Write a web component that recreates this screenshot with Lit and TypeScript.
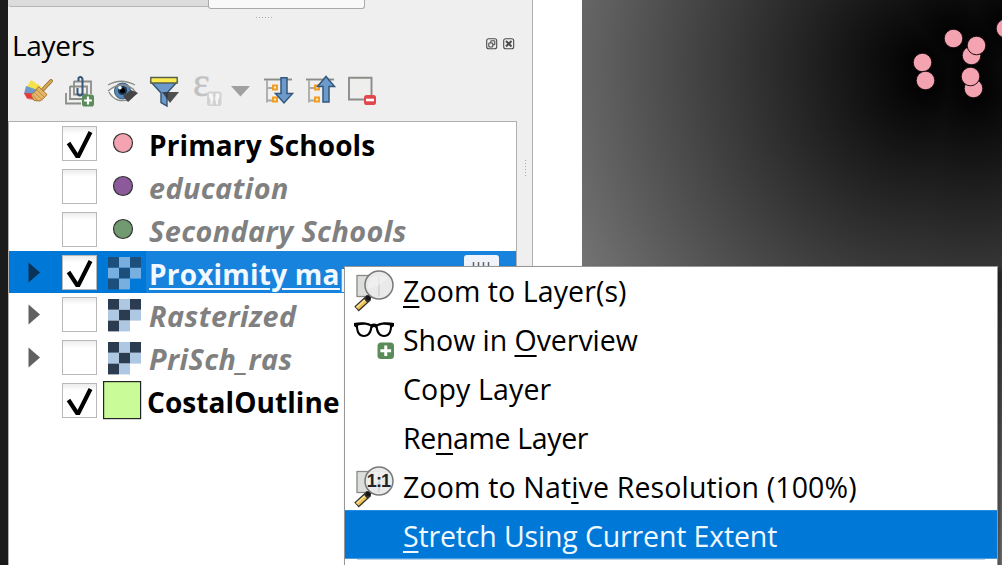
import { LitElement, html, css, svg, nothing } from "lit";
import { customElement, property } from "lit/decorators.js";

const plusBadge = (x: number, y: number, s: number) => svg`
  <g transform="translate(${x} ${y}) scale(${s / 16})">
    <rect x="0" y="0" width="16" height="16" rx="3.4" fill="#5a8c5a"/>
    <path d="M8 2.8V13.2M2.8 8H13.2" stroke="#fff" stroke-width="2.9"/>
  </g>`;

const lens = svg`
  <rect x="3" y="4.500" width="22" height="21" fill="#dcdedc" stroke="#888a85" stroke-width="1.3"/>
  <path d="M15 26.500L2.500 38" stroke="#333" stroke-width="6.600"/>
  <path d="M11.500 29.700L3.200 37.300" stroke="#edc04d" stroke-width="4.200"/>
  <path d="M10.800 29L2.600 36.500" stroke="#f9e7a0" stroke-width="1.200"/>
  <circle cx="14.500" cy="26.500" r="2.600" fill="#161616"/>
  <circle cx="25" cy="14" r="14" fill="#e9e9e9" fill-opacity=".96" stroke="#77797a" stroke-width="1.500"/>
  <path d="M25 6V25" stroke="#c5c7c5" stroke-width="1"/>
  <path d="M14 17a11 11 0 0 1 19-9C28 12 23 17 14 17Z" fill="#f4f4f4" opacity=".6"/>`;

const icons: Record<string, unknown> = {
  zoom: svg`${lens}`,
  native: svg`${lens}<text x="24.500" y="20" text-anchor="middle" class="one">1:1</text>`,
  glasses: svg`
    <path d="M0 3C6 1.800 13 2 17 4.200Q20 3 23 4.200C27 2 34 1.800 40 3V6L38 7.500C37.500 13 35.500 17 30 17C25 17 22.500 13.500 21.700 8Q20 6 18.300 8C17.500 13.500 15 17 10 17C4.500 17 2.500 13 2 7.500L0 6Z" fill="#000"/>
    <path d="M4 5.500C8 4.200 14 4.500 16.300 6.300C16 11 14 15 10 15C6 15 4 11.500 4 5.500Z" fill="#fff"/>
    <path d="M36 5.500C32 4.200 26 4.500 23.700 6.300C24 11 26 15 30 15C34 15 36 11.500 36 5.500Z" fill="#fff"/>
    ${plusBadge(23.5, 22.5, 16.5)}`,
};

const tools = [
  {
    w: 42,
    art: svg`
    <path d="M8 4L19 11L14 17L3 12Z" fill="#f6e34c"/>
    <path d="M3 10L15 14L12 20L1 18Z" fill="#6d9ac8"/>
    <path d="M1 17L14 18L17 24L4 22Z" fill="#e8393b"/>
    <path d="M1 17L14 18L17 25L4 23Z" fill="#e8393b" opacity=".6"/>
    <path d="M20 13.500L28 5" stroke="#94691f" stroke-width="3.800" stroke-linecap="round"/>
    <path d="M20 13.500L28 5" stroke="#d8a75b" stroke-width="2.200" stroke-linecap="round"/>
    <path d="M15.500 10.500L24 18.500L20.500 22.500L17 25L11 24.500L8 19L12.500 15Z" fill="#e5b569" stroke="#a4762e" stroke-width="1"/>
    <path d="M14 14L21.500 21.500M12 17L19.500 24M10 19L14 24" stroke="#b98a40" stroke-width=".9"/>`,
  },
  {
    w: 42,
    art: svg`
    <path d="M1 17V27.500H16" fill="none" stroke="#8b8d88" stroke-width="1.800"/>
    <path d="M5 10.500H22V23M5 10V23H18" fill="none" stroke="#8b8d88" stroke-width="1.800"/>
    <path d="M9 5.500H26V18M9 5V18.500H22" fill="none" stroke="#8b8d88" stroke-width="1.800"/>
    <path d="M12.500 12V18Q15 21 17.500 18V3Q16 -.500 13.500 2V5M17.500 3V18" fill="none" stroke="#34577c" stroke-width="2"/>
    ${plusBadge(17, 18.500, 12)}`,
  },
  {
    w: 42,
    art: svg`
    <path d="M2 16Q14 4 27 14Q30 17 31 20Q20 29 9 23Q5 21 2 16Z" fill="#f7f7f5"/>
    <circle cx="15.500" cy="15" r="8" fill="#5987b6" stroke="#365878" stroke-width="1"/>
    <circle cx="15.500" cy="14.500" r="4.600" fill="#1a3550"/>
    <circle cx="15.500" cy="14.500" r="2.600" fill="#000"/>
    <circle cx="13" cy="11.800" r="1.800" fill="#fff"/>
    <path d="M1 9Q14 1.500 28 9M1 15Q14 4 26 13L30 18M2 16Q5 22 11 24Q18 26 25 22" fill="none" stroke="#8b8d88" stroke-width="1.400"/>
    <path d="M16 20L24 14L31 17L21 26Z" fill="#454545"/>`,
  },
  {
    w: 43,
    art: svg`
    <path d="M2 6H28L18 17V30L12 26.500V17Z" fill="#6b9acb" stroke="#34516f" stroke-width="1.400"/>
    <path d="M1.800 1.500H28.200V7H1.800Z" fill="#fcea4f" stroke="#54604e" stroke-width="1.400"/>
    <path d="M13 16H30L21 27Z" fill="#333" opacity=".85"/>`,
  },
  {
    w: 42,
    art: svg`
    <text x="1" y="19.500" class="eps">ε</text>
    <rect x="15" y="15.500" width="14.500" height="14.500" rx="2.500" fill="#d2d2d2"/>
    <path d="M17 17.500H20.500L21.500 22.500L20 28.500H18.500V24L17 21ZM27.500 17.500H24L23 22.500L24.500 28.500H26V24L27.500 21Z" fill="#f6f6f6"/>`,
  },
  { w: 30, art: svg`<path d="M-3 10H16L6.500 20.500Z" fill="#a0a0a0"/>` },
  {
    w: 42,
    art: svg`
    <path d="M0 3.500H28" stroke="#8b8d88" stroke-width="1.900"/>
    <path d="M3 4V26.500M3 12H9M3 24.500H9" stroke="#a8aaa6" stroke-width="1.800" fill="none"/>
    <path d="M9 9.500h4v4h-4zM9 21.500h4v4h-4z" fill="#fff1d0" stroke="#f29b1d" stroke-width="1.900"/>
    <path d="M17 1.800H23V17.500H28.500L20 27L11.500 17.500H17Z" fill="#6b9acb" stroke="#34577c" stroke-width="1.500"/>`,
  },
  {
    w: 42,
    art: svg`
    <path d="M0 3.500H28" stroke="#8b8d88" stroke-width="1.900"/>
    <path d="M3 4V26.500M3 12H9M3 24.500H9" stroke="#a8aaa6" stroke-width="1.800" fill="none"/>
    <path d="M9 9.500h4v4h-4zM9 21.500h4v4h-4z" fill="#fff1d0" stroke="#f29b1d" stroke-width="1.900"/>
    <path d="M17 26H23V10.500H28.500L20 .500L11.500 10.500H17Z" fill="#6b9acb" stroke="#34577c" stroke-width="1.500"/>`,
  },
  {
    w: 34,
    art: svg`
    <path d="M1 1.800H23.500V23.500H1Z" fill="#eeeeec" stroke="#8b8d88" stroke-width="1.900"/>
    <rect x="16" y="19" width="12" height="10" rx="2.500" fill="#e0484c"/>
    <path d="M18 24H26" stroke="#fff" stroke-width="2.600"/>`,
  },
];

interface Layer {
  name: string;
  checked?: boolean;
  expandable?: boolean;
  selected?: boolean;
  symbol: string;
  color?: string;
  track: number;
}

const layers: Layer[] = [
  { name: "Primary Schools", checked: true, symbol: "point", color: "#f4a3b0", track: 0.12 },
  { name: "education", symbol: "point", color: "#8c5a9b", track: 0.4 },
  { name: "Secondary Schools", symbol: "point", color: "#719a70", track: 0.42 },
  { name: "Proximity map", checked: true, expandable: true, selected: true, symbol: "raster", track: 0.2 },
  { name: "Rasterized", expandable: true, symbol: "raster", track: 0.46 },
  { name: "PriSch_ras", expandable: true, symbol: "raster", track: 0.44 },
  { name: "CostalOutline", checked: true, symbol: "fill", color: "#c9fc98", track: 0.07 },
];

@customElement("layer-row")
class LayerRow extends LitElement {
  @property({ attribute: false }) layer!: Layer;

  static styles = css`
    :host { display: block; }
    .row { display: flex; height: 43px; box-sizing: border-box; padding-top: 4px; }
    .row.selected { height: 42px; background: #0078d7; }
    .arrow { width: 53px; flex: none; }
    .arrow svg { display: block; margin: 7px 0 0 19px; }
    .box { width: 35px; height: 35px; box-sizing: border-box; border: 1px solid #b9b9b9; flex: none;
      background: linear-gradient(#ececec, #fff 7px); }
    .box svg { display: block; }
    .symbol { width: 49px; flex: none; display: flex; }
    .symbol svg { display: block; overflow: visible; }
    .name { flex: 1; margin-top: -4px; padding-left: 3px; font: bold 28px/46px "Open Sans", sans-serif; white-space: nowrap; }
    .name.off { color: #808080; font-style: italic; font-size: 28.800px; }
    .fill { padding-left: 1px; }
    .selected .name { color: #f2f8ff; text-decoration: underline; text-decoration-thickness: 2px; text-underline-offset: 3px;
      background: #1883dc; line-height: 47px; height: 42px; }
  `;

  private symbol() {
    const l = this.layer;
    if (l.symbol === "point")
      return svg`<circle cx="26" cy="17" r="9.500" fill=${l.color} stroke="#333" stroke-width="1.200"/>`;
    if (l.symbol === "fill")
      return svg`<rect x="6.600" y="-1.400" width="37" height="37" fill=${l.color} stroke="#232323" stroke-width="1.200"/>`;
    const dark = l.selected ? "#1d4f7c" : "#2b3b50";
    const light = l.selected ? "#78afe1" : "#aec8e3";
    return [0, 1, 2, 3, 4, 5, 6, 7].map(
      (i) => svg`<rect x=${11 + (i % 3) * 11} y=${2 + Math.floor(i / 3) * 10.8} width="11" height="10.800"
        fill=${i % 2 ? light : dark}/>`
    );
  }

  render() {
    const l = this.layer;
    return html`<div class="row ${l.selected ? "selected" : ""}">
      <div class="arrow">
        ${l.expandable
          ? html`<svg width="13" height="22"><path d="M.500 .500L12 10.500L.500 20.500Z" fill=${l.selected ? "#0a3357" : "#606060"}/></svg>`
          : nothing}
      </div>
      <div class="box">
        ${l.checked
          ? html`<svg width="33" height="33"><path d="M5.500 16L14 29H15.500L27.500 5" fill="none" stroke="#000" stroke-width="4.200"/></svg>`
          : nothing}
      </div>
      <div class="symbol"><svg width="49" height="35">${this.symbol()}</svg></div>
      <div class="name ${l.checked ? "" : "off"} ${l.symbol === "fill" ? "fill" : ""}" style="letter-spacing:${l.track}px">${l.name}</div>
    </div>`;
  }
}

const menu = [
  { icon: "zoom", text: html`<u>Z</u>oom to Layer(s)`, track: 0.09 },
  { icon: "glasses", text: html`Show in <u>O</u>verview`, track: -0.04 },
  { text: html`Copy Layer`, track: 0.15 },
  { text: html`Re<u>n</u>ame Layer`, track: -0.35 },
  { icon: "native", text: html`Zoom to Nat<u>i</u>ve Resolution (100%)`, track: 0.15 },
  { text: html`<u>S</u>tretch Using Current Extent`, track: -0.15, active: true },
];

@customElement("context-menu")
class ContextMenu extends LitElement {
  static styles = css`
    :host { display: block; box-sizing: border-box; background: #fff; border: 1px solid #979797; border-bottom: 0;
      box-shadow: 4px 4px 5px rgba(0, 0, 0, 0.45); }
    .item { display: flex; height: 49px; font: 28.500px/52px "Open Sans", sans-serif; color: #000; white-space: nowrap; }
    .item:first-child { height: 47px; line-height: 49px; }
    .item.active { height: 49px; line-height: 51px; background: #0078d7; color: #f0f8ff; box-sizing: border-box;
      border-top: 1px solid #268bdc; border-bottom: 1px solid #4a9fe2; }
    .icon { width: 49px; flex: none; padding-left: 9px; }
    .icon svg { display: block; margin-top: 6px; overflow: visible; }
    .item:first-child .icon svg { margin-top: 4px; }
    .slot { flex: none; width: 58px; display: flex; }
    u { text-decoration-thickness: 2px; text-underline-offset: 4px; }
    .one { font: bold 18px "Liberation Sans", sans-serif; letter-spacing: -0.900px; fill: #222; }
    .sep { height: 1px; margin: 0 12px; background: #b5d3ec; }
  `;

  render() {
    return html`${menu.map(
        (m) => html`<div class="item ${m.active ? "active" : ""}">
          <div class="slot"><div class="icon">${m.icon ? html`<svg width="40" height="40">${icons[m.icon]}</svg>` : nothing}</div></div>
          <div style="letter-spacing:${m.track}px">${m.text}</div>
        </div>`
      )}
      <div class="sep"></div>`;
  }
}

const schools = [
  [340.5, 62.5], [343.5, 80.5], [371.5, 38.5], [389.5, 55.5], [394.5, 45.5], [391.5, 88.5], [388.5, 76.5], [423.5, 28.5],
];

@customElement("app-root")
class AppRoot extends LitElement {
  static styles = css`
    :host { display: block; }
    .screen { position: relative; display: grid; grid-template-columns: 8px 525px 49px 420px; width: 1002px; height: 565px;
      overflow: hidden; background: #fff; font-family: "Open Sans", sans-serif; }
    .edge { background: #1b1b1b; }
    .dock { background: #efefef; border-right: 1px solid #b1b1b1; min-width: 0; }
    .tabs { display: flex; height: 9px; }
    .tab { height: 6px; width: 200px; background: #dcdcdc; border-bottom: 1px solid #b5b5b5; border-radius: 0 0 0 3px; }
    .tab.on { height: 8px; width: 155px; background: #f9f9f9; border: 1px solid #aaa; border-top: 0; border-radius: 0 0 3px 3px; }
    .grip { width: 17px; height: 1px; margin: 8px 0 0 248px;
      background: repeating-linear-gradient(90deg, #aaa 0 1px, transparent 1px 3px); }
    .head { display: flex; align-items: center; height: 56px; padding-left: 4px; }
    .title { flex: 1; font-size: 28px; line-height: 54px; height: 56px; letter-spacing: -0.3px; }
    .head svg { margin: -5px 17px 0 0; }
    .tools { display: flex; height: 45px; padding: 2px 0 0 15px; }
    .tools svg { display: block; overflow: visible; flex: none; }
    .eps { font: 40px "Liberation Serif", serif; fill: #c2c2c2; stroke: #c2c2c2; stroke-width: 0.5px; }
    .body { display: flex; height: 444px; }
    .tree { width: 507px; border: 1px solid #b0b0b0; background: #fff; border-bottom: 0; }
    .handle { width: 1px; height: 17px; margin: 39px 0 0 8px;
      background: repeating-linear-gradient(#aaa 0 1px, transparent 1px 3px); }
    .map { background-color: #fff; background-blend-mode: darken; }
    .map svg { display: block; }
    .map circle { fill: #f4a3b0; stroke: #1c0d10; stroke-width: 1px; }
    .chip { position: absolute; left: 464px; top: 255px; width: 35px; height: 24px; border-radius: 3px; background: #f0f4fa; }
    .chip svg { display: block; }
    .menu { position: absolute; left: 344px; top: 266px; width: 654px; height: 299px; }
  `;

  render() {
    const field = schools
      .map(([x, y]) => `radial-gradient(circle at ${x}px ${y}px, #000 0, rgb(148,148,148) 500px)`)
      .join(",");
    return html`<div class="screen">
      <div class="edge"></div>
      <div class="dock">
        <div class="tabs"><div class="tab"></div><div class="tab on"></div></div>
        <div class="grip"></div>
        <div class="head">
          <div class="title">Layers</div>
          <svg width="29" height="12" fill="none" stroke="#4b4b4b" stroke-width="1.100">
            <rect x=".700" y=".700" width="10" height="10" rx="2"/>
            <rect x="4.800" y="2.800" width="4" height="4" rx=".800"/><rect x="2.800" y="5" width="4" height="4" rx=".800" fill="#efefef"/>
            <rect x="17.700" y=".700" width="10" height="10" rx="2"/>
            <path d="M20 3L25.500 8.500M25.500 3L20 8.500" stroke-width="2"/>
          </svg>
        </div>
        <div class="tools">${tools.map((t) => html`<svg width=${t.w} height="32">${t.art}</svg>`)}</div>
        <div class="body">
          <div class="tree">${layers.map((l) => html`<layer-row .layer=${l}></layer-row>`)}</div>
          <div class="handle"></div>
        </div>
      </div>
      <div></div>
      <div class="map" style="background-image:${field}">
        <svg width="420" height="266">${schools.map(([x, y]) => svg`<circle cx=${x} cy=${y} r="9.300"/>`)}</svg>
      </div>
      <div class="chip"><svg width="35" height="12"><path d="M9.500 7V12M14.500 7V12M19.500 7V12M24.500 7V12" stroke="#666" stroke-width="1.500"/></svg></div>
      <context-menu class="menu"></context-menu>
    </div>`;
  }
}
